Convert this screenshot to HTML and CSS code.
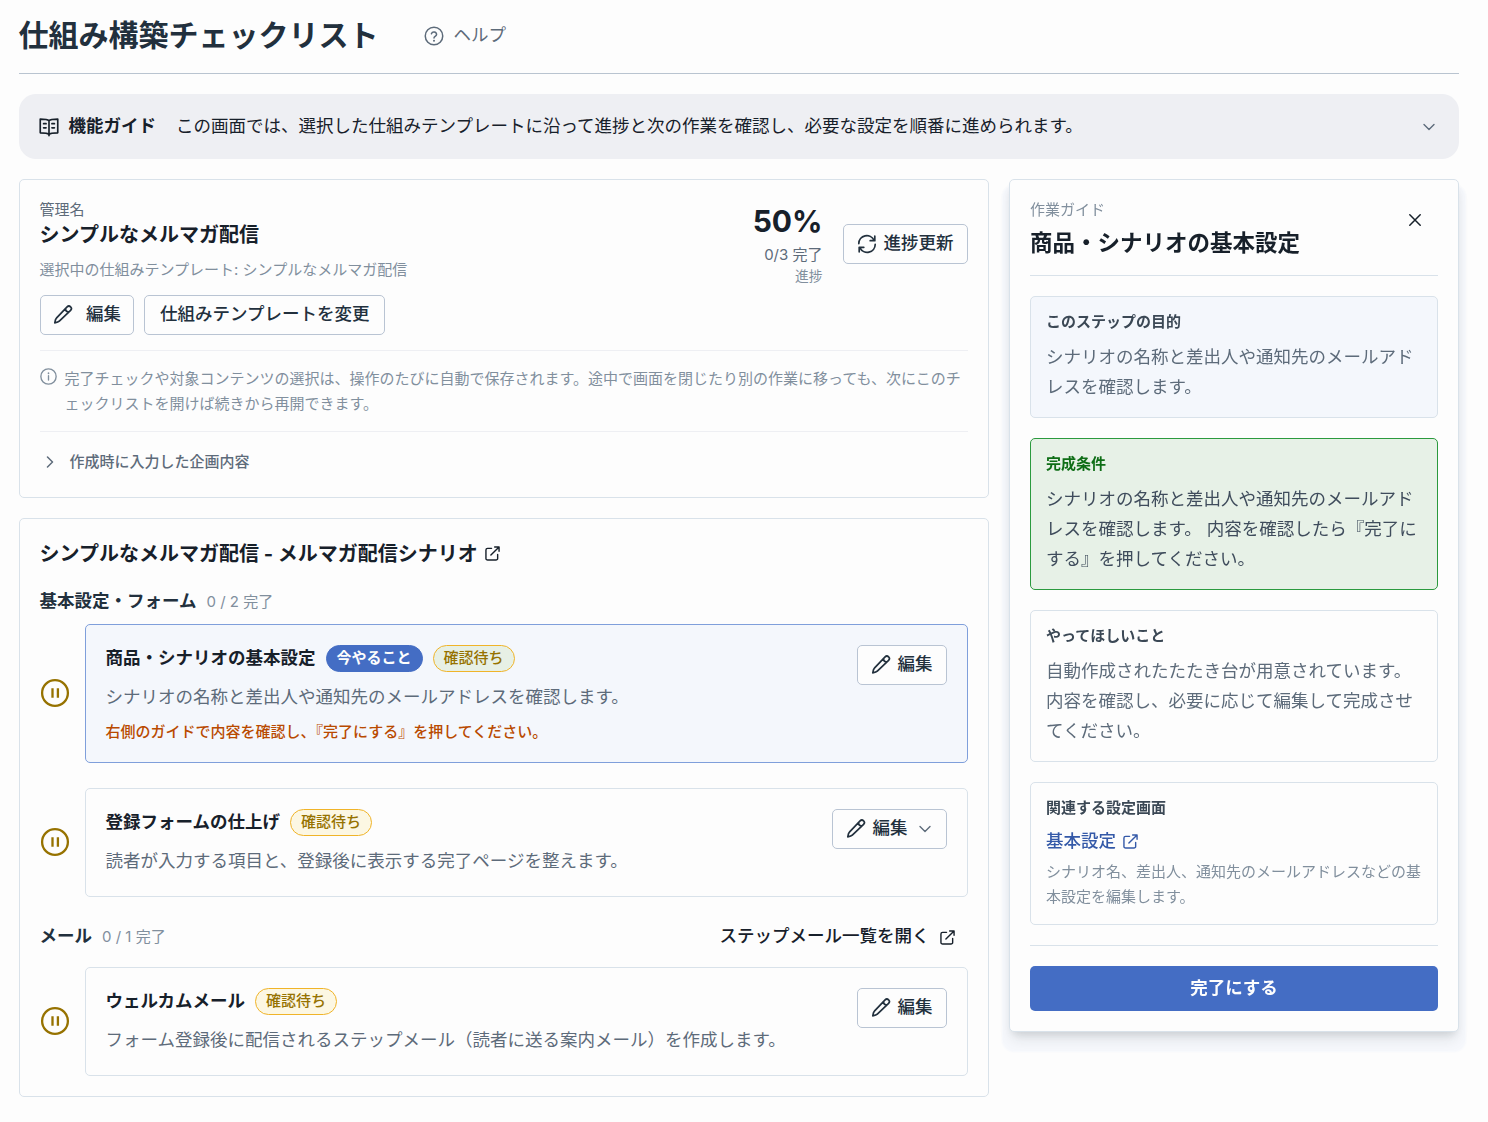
FILE: index.html
```html
<!DOCTYPE html>
<html lang="ja">
<head>
    <meta charset="UTF-8">
    <meta name="viewport" content="width=device-width, initial-scale=1.0">
    <title>仕組み構築チェックリスト</title>
    <link rel="stylesheet" href="styles.css">
</head>
<body>
    <svg class="sprite" aria-hidden="true">
        <symbol id="i-help" viewBox="0 0 24 24"><circle cx="12" cy="12" r="10.5"/><path d="M8.9 9.3a3.2 3.2 0 0 1 6.2.9c0 2.1-3.1 2.5-3.1 4.1"/><path d="M12 17.6v.1" stroke-width="2.4"/></symbol>
        <symbol id="i-info" viewBox="0 0 24 24"><circle cx="12" cy="12" r="10.8"/><path d="M12 11v6"/><path d="M12 7.3v.2" stroke-width="2.4"/></symbol>
        <symbol id="i-book" viewBox="0 0 24 24"><path d="M12 4.5C10.6 3 8 2.500 1.500 2.500v16.500c6.500 0 9.100.3 10.500 2 1.400-1.700 4-2 10.500-2V2.500C16 2.500 13.400 3 12 4.500zM12 4.500V22.500M5.500 8h3M5.500 13h3M15.500 8h3M15.500 13h3"/></symbol>
        <symbol id="i-pencil" viewBox="0 0 20 20"><path d="M14.100 1.800c1-1 2.600-.9 3.500 0s1 2.500 0 3.500L6.300 16.200c-.7.700-1.600 1.100-4.500 1.600.4-3 .9-3.900 1.600-4.600zM12.300 3.600c.2 1.800 1.500 3.200 3.500 3.500"/></symbol>
        <symbol id="i-refresh" viewBox="0 0 20 20"><path d="M1.800 9.600A8 8 0 0 1 17 6.200M17.800 2.200v4.500h-4.600M18.200 10.400A8 8 0 0 1 3 13.800M2.200 17.800v-4.500h4.600"/></symbol>
        <symbol id="i-external" viewBox="0 0 16 16"><path d="M7 2.500H2.800A1.800 1.800 0 0 0 1 4.300v8.900A1.800 1.800 0 0 0 2.800 15h8.900a1.800 1.800 0 0 0 1.800-1.800V9M10.300 1H15v4.700M15 1L6.300 9.700"/></symbol>
        <symbol id="i-down" viewBox="0 0 12 12"><path d="M1 3.500l5 5 5-5"/></symbol>
        <symbol id="i-right" viewBox="0 0 12 12"><path d="M3.500 1l5 5-5 5"/></symbol>
        <symbol id="i-close" viewBox="0 0 12 12"><path d="M.8.8l10.400 10.400M11.200.8L.8 11.200"/></symbol>
        <symbol id="i-pause" viewBox="0 0 30 30"><circle cx="15" cy="15" r="12.900"/><path d="M12.500 10.300v9.400M17.900 10.300v9.400"/></symbol>
    </svg>

    <div class="page">
        <header class="page-header">
            <h1>仕組み構築チェックリスト</h1>
            <a class="help"><svg class="icon"><use href="#i-help"/></svg>ヘルプ</a>
        </header>

        <div class="feature-guide">
            <svg class="icon"><use href="#i-book"/></svg>
            <strong>機能ガイド</strong>
            <span>この画面では、選択した仕組みテンプレートに沿って進捗と次の作業を確認し、必要な設定を順番に進められます。</span>
            <svg class="icon chevron"><use href="#i-down"/></svg>
        </div>

        <div class="layout">
            <main class="main">
                <section class="card">
                    <div class="summary">
                        <div class="summary-info">
                            <div class="label">管理名</div>
                            <h2>シンプルなメルマガ配信</h2>
                            <p class="template">選択中の仕組みテンプレート: シンプルなメルマガ配信</p>
                            <div class="buttons">
                                <button class="btn btn-wide"><svg class="icon"><use href="#i-pencil"/></svg><span>編集</span></button>
                                <button class="btn btn-text"><span>仕組みテンプレートを変更</span></button>
                            </div>
                        </div>
                        <div class="progress">
                            <div class="progress-numbers">
                                <div class="percent">50%</div>
                                <div class="count">0/3 完了</div>
                                <div class="caption">進捗</div>
                            </div>
                            <button class="btn"><svg class="icon"><use href="#i-refresh"/></svg><span>進捗更新</span></button>
                        </div>
                    </div>
                    <div class="notice">
                        <svg class="icon"><use href="#i-info"/></svg>
                        <p>完了チェックや対象コンテンツの選択は、操作のたびに自動で保存されます。途中で画面を閉じたり別の作業に移っても、次にこのチェックリストを開けば続きから再開できます。</p>
                    </div>
                    <div class="plan"><svg class="icon"><use href="#i-right"/></svg>作成時に入力した企画内容</div>
                </section>

                <section class="card">
                    <h2 class="scenario-title">シンプルなメルマガ配信 - メルマガ配信シナリオ<svg class="icon"><use href="#i-external"/></svg></h2>

                    <div class="group-head">
                        <h3>基本設定・フォーム</h3>
                        <span>0 / 2 完了</span>
                    </div>
                    <div class="steps">
                        <div class="step">
                            <svg class="icon pause"><use href="#i-pause"/></svg>
                            <div class="step-card active">
                                <div class="step-body">
                                    <div class="step-title">
                                        <h4>商品・シナリオの基本設定</h4>
                                        <span class="badge badge-now">今やること</span>
                                        <span class="badge badge-wait">確認待ち</span>
                                    </div>
                                    <p>シナリオの名称と差出人や通知先のメールアドレスを確認します。</p>
                                    <p class="step-alert">右側のガイドで内容を確認し、『完了にする』を押してください。</p>
                                </div>
                                <button class="btn"><svg class="icon"><use href="#i-pencil"/></svg><span>編集</span></button>
                            </div>
                        </div>
                        <div class="step">
                            <svg class="icon pause"><use href="#i-pause"/></svg>
                            <div class="step-card">
                                <div class="step-body">
                                    <div class="step-title">
                                        <h4>登録フォームの仕上げ</h4>
                                        <span class="badge badge-wait">確認待ち</span>
                                    </div>
                                    <p>読者が入力する項目と、登録後に表示する完了ページを整えます。</p>
                                </div>
                                <button class="btn btn-menu"><svg class="icon"><use href="#i-pencil"/></svg><span>編集</span><svg class="icon chevron"><use href="#i-down"/></svg></button>
                            </div>
                        </div>
                    </div>

                    <div class="group-head group-mail">
                        <h3>メール</h3>
                        <span>0 / 1 完了</span>
                        <a class="open-list"><b>ステップメール一覧を開く</b><svg class="icon"><use href="#i-external"/></svg></a>
                    </div>
                    <div class="steps">
                        <div class="step">
                            <svg class="icon pause"><use href="#i-pause"/></svg>
                            <div class="step-card">
                                <div class="step-body">
                                    <div class="step-title">
                                        <h4>ウェルカムメール</h4>
                                        <span class="badge badge-wait">確認待ち</span>
                                    </div>
                                    <p>フォーム登録後に配信されるステップメール（読者に送る案内メール）を作成します。</p>
                                </div>
                                <button class="btn"><svg class="icon"><use href="#i-pencil"/></svg><span>編集</span></button>
                            </div>
                        </div>
                    </div>
                </section>
            </main>

            <aside class="panel">
                <div class="panel-header">
                    <div>
                        <div class="label">作業ガイド</div>
                        <h2>商品・シナリオの基本設定</h2>
                    </div>
                    <button class="close" aria-label="閉じる"><svg class="icon"><use href="#i-close"/></svg></button>
                </div>
                <div class="box box-purpose">
                    <h3>このステップの目的</h3>
                    <p>シナリオの名称と差出人や通知先のメールアドレスを確認します。</p>
                </div>
                <div class="box box-done">
                    <h3>完成条件</h3>
                    <p>シナリオの名称と差出人や通知先のメールアドレスを確認します。 内容を確認したら『完了にする』を押してください。</p>
                </div>
                <div class="box">
                    <h3>やってほしいこと</h3>
                    <p>自動作成されたたたき台が用意されています。内容を確認し、必要に応じて編集して完成させてください。</p>
                </div>
                <div class="box">
                    <h3>関連する設定画面</h3>
                    <a class="setting-link">基本設定<svg class="icon"><use href="#i-external"/></svg></a>
                    <p class="hint">シナリオ名、差出人、通知先のメールアドレスなどの基本設定を編集します。</p>
                </div>
                <div class="panel-footer">
                    <button class="btn-primary">完了にする</button>
                </div>
            </aside>
        </div>
    </div>
</body>
</html>
```

FILE: styles.css
```css
* {
    box-sizing: border-box;
}
body {
    margin: 0;
    background: #fdfdfd;
    color: #17202a;
    font-family: Inter, "Noto Sans CJK JP", sans-serif;
    font-size: 17.5px;
    line-height: 30px;
}
h1, h2, h3, h4, p {
    margin: 0;
}
button {
    font-family: inherit;
    cursor: pointer;
}
.sprite {
    display: none;
}
.icon {
    width: 18px;
    height: 18px;
    flex: none;
    fill: none;
    stroke: currentColor;
    stroke-width: 1.5;
    stroke-linecap: round;
    stroke-linejoin: round;
}
.page {
    width: 1440px;
    margin-left: 18.5px;
}

/* header */
.page-header {
    display: flex;
    align-items: center;
    height: 74px;
    padding-bottom: 3px;
    border-bottom: 1px solid #b9c4d0;
}
h1 {
    font-size: 30px;
    line-height: 40px;
    color: #22303d;
}
.help {
    display: flex;
    align-items: center;
    gap: 10px;
    margin-left: 45px;
    color: #5d6b7a;
}
.help .icon {
    width: 20px;
    height: 20px;
    margin-top: 2px;
    stroke-width: 1.8;
}
.feature-guide {
    display: flex;
    align-items: center;
    height: 65px;
    margin: 20px 0;
    padding: 0 20px;
    border-radius: 17px;
    background: #eeeff3;
}
.feature-guide .icon {
    width: 20px;
    height: 20px;
    stroke-width: 2;
}
.feature-guide strong {
    margin: 0 20px 0 10px;
    padding-bottom: 2px;
}
.feature-guide span {
    padding-bottom: 2px;
}
.feature-guide .chevron {
    width: 12px;
    height: 12px;
    margin: 0 4px 0 auto;
    color: #5d6b7a;
    stroke-width: 1.4;
}

.layout {
    display: grid;
    grid-template-columns: 970px 450px;
    gap: 20px;
    align-items: start;
}
.main {
    display: grid;
    gap: 20px;
}
.card {
    padding: 20px;
    border: 1px solid #d9e2ea;
    border-radius: 5px;
}
.label {
    font-size: 15px;
    line-height: 20px;
    color: #5d6b7a;
}

/* buttons */
.btn {
    display: inline-flex;
    align-items: center;
    gap: 7px;
    height: 40px;
    padding: 0 13px;
    border: 1px solid #b9c4d3;
    border-radius: 5px;
    background: #fdfdfd;
    color: #22303d;
    font-size: 17.5px;
    font-weight: 500;
    white-space: nowrap;
}
.btn span {
    padding-bottom: 2px;
    line-height: 30px;
}
.btn .icon {
    width: 20px;
    height: 20px;
    stroke-width: 1.7;
}
.btn-wide {
    gap: 13px;
    padding: 0 12px 0 12.5px;
}
.btn-text {
    padding: 0 15px;
}
.btn .chevron {
    width: 12px;
    height: 12px;
    margin: 0 2px 0 4px;
    stroke-width: 1.4;
    color: #5d6b7a;
}

/* summary card */
.summary {
    display: flex;
    justify-content: space-between;
    padding-bottom: 15px;
    border-bottom: 1px solid #eeeff3;
}
.summary h2, .scenario-title {
    font-size: 20px;
    line-height: 30px;
}
.template {
    margin: 10px 0 15px;
    font-size: 15px;
    line-height: 20px;
    color: #818f9d;
}
.buttons {
    display: flex;
    gap: 10px;
}
.progress {
    display: flex;
    align-items: center;
    align-self: flex-start;
    gap: 20px;
    height: 88px;
}
.progress-numbers {
    padding-bottom: 2px;
    text-align: right;
}
.percent {
    font-size: 30px;
    font-weight: 700;
    line-height: 43px;
}
.count {
    font-size: 15px;
    line-height: 23px;
    color: #5d6b7a;
}
.caption {
    font-size: 13.75px;
    line-height: 20px;
    color: #818f9d;
}
.notice {
    display: flex;
    gap: 8px;
    padding: 15px 0;
    border-bottom: 1px solid #eeeff3;
    font-size: 15px;
    line-height: 25px;
    color: #818f9d;
}
.notice .icon {
    width: 17px;
    height: 17px;
    margin-top: 2px;
    stroke-width: 1.9;
}
.plan {
    display: flex;
    align-items: center;
    gap: 14px;
    margin-top: 15px;
    padding-left: 4px;
    font-size: 15px;
    font-weight: 500;
    color: #5d6b7a;
}
.plan .icon {
    width: 12px;
    height: 12px;
}

/* checklist */
.scenario-title {
    display: flex;
    align-items: center;
    gap: 7px;
}
.scenario-title .icon, .open-list .icon, .setting-link .icon {
    width: 15px;
    height: 15px;
}
.scenario-title .icon {
    margin-bottom: 1px;
}
.group-head {
    display: flex;
    align-items: center;
    gap: 10px;
    height: 25px;
    margin: 20px 0 10px;
}
.group-head h3 {
    padding-bottom: 2px;
    font-size: 17.5px;
    color: #22303d;
}
.group-head span {
    font-size: 15px;
    color: #818f9d;
}
.group-mail {
    height: 40px;
}
.open-list {
    display: flex;
    align-items: center;
    gap: 10px;
    margin: 0 13px 0 auto;
}
.open-list b {
    padding-bottom: 2px;
    font-weight: 500;
}
.steps {
    display: grid;
    gap: 25px;
}
.step {
    display: flex;
    align-items: center;
    gap: 15px;
}
.pause {
    width: 30px;
    height: 30px;
    margin-bottom: 1px;
    color: #967200;
    stroke-width: 2.3;
    stroke-linecap: butt;
}
.step-card {
    display: flex;
    flex: 1;
    justify-content: space-between;
    align-items: flex-start;
    padding: 20px;
    border: 1px solid #d9e2ea;
    border-radius: 5px;
}
.step-card.active {
    border-color: #7f9fdb;
    background: #f4f7fc;
}
.step-title {
    display: flex;
    align-items: center;
    gap: 10px;
    height: 27px;
    margin-bottom: 10px;
}
.step-title h4 {
    padding-bottom: 2px;
    font-size: 17.5px;
}
.step-body p {
    color: #5d6b7a;
}
.badge {
    height: 27px;
    padding: 0 10px;
    border: 1px solid;
    border-radius: 14px;
    font-size: 15px;
    font-weight: 500;
    line-height: 24px;
}
.badge-now {
    border-color: #446dc4;
    background: #446dc4;
    color: #fdfdfd;
    font-weight: 700;
}
.badge-wait {
    border-color: #f0b429;
    background: #fcf7e3;
    color: #967200;
}
.active .badge-wait {
    background: #e7f0e5;
}
.step-body .step-alert {
    margin-top: 10px;
    font-size: 15px;
    font-weight: 500;
    line-height: 20px;
    color: #b94a00;
}

/* side guide */
.panel {
    display: grid;
    gap: 20px;
    padding: 20px;
    border: 1px solid #d9e2ea;
    border-radius: 5px;
    background: #fdfdfd;
    box-shadow: 0 5px 8px -4px rgba(30, 40, 40, 0.14), 0 10px 14px -3px rgba(30, 40, 40, 0.1), 0 13px 2px 7px #f6f8fc;
    will-change: transform;
}
.panel-header {
    display: flex;
    justify-content: space-between;
    height: 76px;
    border-bottom: 1px solid #d9e2ea;
}
.panel-header .label {
    color: #818f9d;
}
.panel-header h2 {
    margin-top: 8px;
    font-size: 22.5px;
}
.close {
    width: 46px;
    height: 40px;
    padding: 0 0 2px;
    border: 0;
    background: none;
    color: #17202a;
}
.close .icon {
    width: 12px;
    height: 12px;
    vertical-align: middle;
}
.box {
    padding: 15px;
    border: 1px solid #d9e2ea;
    border-radius: 5px;
    color: #5d6b7a;
}
.box h3 {
    margin-bottom: 10px;
    font-size: 15px;
    line-height: 20px;
    color: #3b4855;
}
.box-purpose {
    background: #f4f7fc;
}
.box-done {
    border-color: #2b9a3e;
    background: #e7f1e7;
    color: #3f4c5c;
}
.box-done h3 {
    color: #0f6e17;
}
.setting-link {
    display: flex;
    align-items: center;
    gap: 7px;
    margin-bottom: 5px;
    line-height: 26px;
    font-weight: 500;
    color: #3459a8;
}
.box .hint {
    font-size: 15px;
    line-height: 25px;
    color: #818f9d;
}
.panel-footer {
    padding-top: 20px;
    border-top: 1px solid #d9e2ea;
}
.btn-primary {
    display: block;
    width: 100%;
    height: 45px;
    padding: 0 0 4px;
    border: 0;
    border-radius: 5px;
    background: #446dc4;
    color: #fdfdfd;
    font-size: 17.5px;
    font-weight: 700;
}
```
